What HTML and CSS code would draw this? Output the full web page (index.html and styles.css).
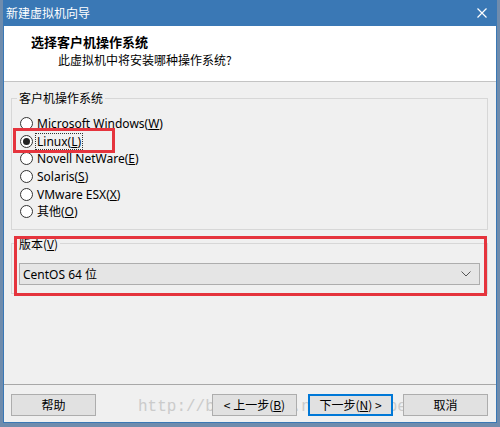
FILE: index.html
```html
<!DOCTYPE html>
<html lang="zh-CN">
<head>
<meta charset="utf-8">
<title>新建虚拟机向导</title>
<link rel="stylesheet" href="styles.css">
</head>
<body>
<div class="window">
  <div class="titlebar">
    <span class="title">新建虚拟机向导</span>
    <svg class="close" width="10" height="10" viewBox="0 0 10 10"><path d="M0.5 0.5L9.5 9.5M9.5 0.5L0.5 9.5" stroke="#fff" stroke-width="1.2" fill="none"/></svg>
  </div>
  <div class="header">
    <div class="heading">选择客户机操作系统</div>
    <div class="subheading">此虚拟机中将安装哪种操作系统?</div>
  </div>
  <div class="content">
    <fieldset class="group os-group">
      <legend>客户机操作系统</legend>
      <div class="radios">
        <div class="radio-row"><span class="radio"></span><span class="label">Microsoft Windows(<u>W</u>)</span></div>
        <div class="radio-row"><span class="radio checked"></span><span class="label focus">Linux(<u>L</u>)</span></div>
        <div class="radio-row"><span class="radio"></span><span class="label">Novell NetWare(<u>E</u>)</span></div>
        <div class="radio-row"><span class="radio"></span><span class="label">Solaris(<u>S</u>)</span></div>
        <div class="radio-row"><span class="radio"></span><span class="label">VMware ESX(<u>X</u>)</span></div>
        <div class="radio-row"><span class="radio"></span><span class="label">其他(<u>O</u>)</span></div>
      </div>
    </fieldset>
    <fieldset class="group version-group">
      <legend>版本(<u>V</u>)</legend>
      <div class="combo">
        <span class="combo-text">CentOS 64 位</span>
        <svg class="chevron" width="10" height="6" viewBox="0 0 10 6"><path d="M0.5 0.5L5 5L9.5 0.5" stroke="#555" stroke-width="1" fill="none"/></svg>
      </div>
    </fieldset>
  </div>
  <div class="watermark">http://blog.csdn.net/zhangpengrong85</div>
  <div class="footer">
    <button class="btn">帮助</button>
    <div class="nav">
      <button class="btn">&lt; 上一步(<u>B</u>)</button>
      <button class="btn primary">下一步(<u>N</u>) &gt;</button>
      <button class="btn">取消</button>
    </div>
  </div>
  <div class="mark mark-linux"></div>
  <div class="mark mark-version"></div>
</div>
</body>
</html>
```
FILE: styles.css
```css
* { box-sizing: border-box; }
html, body { margin: 0; padding: 0; }
body {
  width: 500px;
  height: 427px;
  overflow: hidden;
  background: #6f8cad;
  font-family: "Noto Sans", "Noto Sans CJK SC", sans-serif;
  font-size: 12px;
  color: #000;
}
.window {
  position: relative;
  margin-left: 3px;
  width: 494px;
  height: 423px;
  border: 1px solid #3a78b5;
  background: #f0f0f0;
  display: flex;
  flex-direction: column;
}
.titlebar {
  height: 25px;
  background: #3a78b5;
  display: flex;
  align-items: center;
  justify-content: space-between;
  padding: 0 9px 1px 2px;
  flex: none;
}
.title {
  color: #fff;
  font-family: "Noto Sans CJK SC", sans-serif;
  font-size: 12px;
  line-height: 16px;
}
.header {
  height: 56px;
  flex: none;
  background: #fff;
  border-bottom: 1px solid #c4c4c4;
  padding: 7px 0 0 27px;
}
.heading {
  font-family: "Noto Sans CJK SC", sans-serif;
  font-weight: bold;
  font-size: 13px;
  line-height: 18px;
}
.subheading {
  font-family: "Noto Sans CJK SC", sans-serif;
  font-size: 12px;
  line-height: 18px;
  margin-left: 27px;
}
.content {
  flex: 1;
  padding: 0 8px 0 7px;
}
.group {
  margin: 0;
  padding: 0;
  border: 1px solid #d7d7d7;
  min-width: 0;
}
.group legend {
  margin-left: 5px;
  padding: 0 2px;
  font-size: 12px;
  line-height: 16px;
  font-family: "Noto Sans CJK SC", sans-serif;
}
.os-group { margin-top: 8px; }
.radios {
  padding: 9px 0 8px 8px;
}
.radio-row {
  height: 17.6px;
  display: flex;
  align-items: center;
}
.radio {
  width: 13px;
  height: 13px;
  border: 1px solid #333;
  border-radius: 50%;
  background: #fff;
  flex: none;
  position: relative;
}
.radio.checked::after {
  content: "";
  position: absolute;
  left: 2px;
  top: 2px;
  width: 7px;
  height: 7px;
  border-radius: 50%;
  background: #222;
}
.label {
  margin-left: 3px;
  line-height: 15px;
  padding: 0 1px;
  white-space: nowrap;
}
.label.focus { outline: 1px dotted #333; outline-offset: 0; }
.version-group { margin-top: 6px; }
.combo {
  margin: 11px 7px 8px 7px;
  height: 22px;
  border: 1px solid #adadad;
  background: #e5e5e5;
  display: flex;
  align-items: center;
  justify-content: space-between;
  padding: 0 8px 0 3px;
}
.combo-text {
  font-family: "Noto Sans", "Noto Sans CJK SC", sans-serif;
  font-size: 12px;
}
.footer {
  position: relative;
  z-index: 2;
  flex: none;
  border-top: 1px solid #a8a8a8;
  padding: 9px 8px 6px 7px;
  display: flex;
  align-items: center;
}
.nav {
  margin-left: auto;
  display: flex;
  gap: 10px;
}
.btn {
  width: 85px;
  height: 22px;
  border: 1px solid #adadad;
  background: #e1e1e1;
  font-family: "Noto Sans CJK SC", sans-serif;
  font-size: 12px;
  color: #000;
  padding: 0;
  margin: 0;
  line-height: 18px;
}
.nav .btn:first-child { margin-right: 1px; }
.btn.primary {
  border: 1px solid #0078d7;
  box-shadow: inset 0 0 0 1px #0078d7;
}
.mark {
  position: absolute;
  z-index: 3;
  border: 3px solid #e5343d;
  pointer-events: none;
}
.mark-linux {
  left: 9px;
  top: 127px;
  width: 102px;
  height: 25px;
}
.mark-version {
  left: 10px;
  top: 235px;
  width: 473px;
  height: 60px;
}
.watermark {
  position: absolute;
  z-index: 1;
  left: 134px;
  top: 398px;
  font-family: "Liberation Mono", monospace;
  font-size: 16px;
  line-height: 16px;
  color: #cbcbcb;
  white-space: nowrap;
  pointer-events: none;
}
```
